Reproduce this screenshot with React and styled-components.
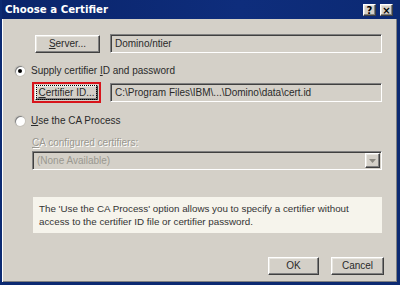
import React from "react";
import styled, { createGlobalStyle, css } from "styled-components";

const Global = createGlobalStyle`
  html, body { margin: 0; padding: 0; background: #d4d0c8; }
  body { font-family: "Liberation Sans", Arial, sans-serif; }
`;

const Window = styled.div`
  width: 400px;
  height: 285px;
  box-sizing: border-box;
  display: flex;
  flex-direction: column;
  background: #0c2a72;
  padding: 0 3px 3px 2px;
`;

const TitleBar = styled.div`
  height: 19px;
  display: flex;
  align-items: center;
  padding: 0 4px 0 3px;
  background: linear-gradient(90deg, #0a246a, #0e2d7c 60%, #0c2a74);
  color: #fff;
  font-family: "DejaVu Sans", sans-serif;
  font-weight: bold;
  font-size: 10.2px;
`;

const TitleText = styled.span`
  flex: 1;
`;

const raised = css`
  border-top: 1px solid #fff;
  border-left: 1px solid #fff;
  border-right: 1px solid #404040;
  border-bottom: 1px solid #404040;
  box-shadow: inset -1px -1px 0 #808080, inset 1px 1px 0 #e8e6e0;
`;

const sunken = css`
  border-top: 1px solid #808080;
  border-left: 1px solid #808080;
  border-right: 1px solid #fff;
  border-bottom: 1px solid #fff;
  box-shadow: inset 1px 1px 0 #404040, inset -1px -1px 0 #d4d0c8;
`;

const CapButton = styled.span`
  ${raised};
  width: 13px;
  height: 12px;
  margin-left: 4px;
  background: #d4d0c8;
  color: #000;
  font-family: "DejaVu Sans", sans-serif;
  font-weight: bold;
  font-size: 10px;
  line-height: 11px;
  text-align: center;
  box-sizing: border-box;
`;

const Body = styled.div`
  flex: 1;
  background: #d4d0c8;
  box-shadow: inset 1px 0 0 #fff, inset -1px 0 0 #808080, inset 0 -1px 0 #808080;
  padding: 15px 15px 0 13px;
  font-size: 10px;
  color: #2a2a2a;
  display: flex;
  flex-direction: column;
`;

const Row = styled.div`
  display: flex;
  align-items: center;
  margin-top: ${(p) => p.$mt || 0}px;
  padding-left: ${(p) => p.$indent || 0}px;
`;

const Button = styled.button`
  ${raised};
  font: inherit;
  line-height: 12px;
  color: #2a2a2a;
  background: #d4d0c8;
  width: ${(p) => p.$w || 65}px;
  height: ${(p) => p.$h || 18}px;
  padding: 0;
  box-sizing: border-box;
  cursor: default;
`;

const FocusRing = styled.span`
  display: flex;
  border: 2px solid #d8141b;
  padding: 1px;
  margin-left: -3px;
`;

const FocusText = styled.span`
  outline: 1px dotted #000;
  outline-offset: 1px;
`;

const Field = styled.div`
  ${sunken};
  flex: 1;
  height: 19px;
  box-sizing: border-box;
  margin-left: ${(p) => p.$ml ?? 10}px;
  padding: 0 4px;
  display: flex;
  align-items: center;
  color: ${(p) => (p.$disabled ? "#9a9890" : "#2a2a2a")};
  white-space: nowrap;
  overflow: hidden;
`;

const Radio = styled.span`
  width: 10px;
  height: 10px;
  border-radius: 50%;
  background: #fff;
  box-shadow: inset 1px 1px 0 #808080, 0 0 0 1px #c8c4bc;
  margin-right: 6px;
  display: flex;
  align-items: center;
  justify-content: center;
  &::after {
    content: "";
    width: 4px;
    height: 4px;
    border-radius: 50%;
    background: ${(p) => (p.$checked ? "#000" : "transparent")};
  }
`;

const Label = styled.span`
  color: ${(p) => (p.$disabled ? "#9a9890" : "#2a2a2a")};
  text-shadow: ${(p) => (p.$disabled ? "1px 1px 0 #fff" : "none")};
`;

const DropButton = styled.span`
  ${raised};
  width: 15px;
  height: 15px;
  box-sizing: border-box;
  margin-left: auto;
  margin-right: -3px;
  display: flex;
  align-items: center;
  justify-content: center;
  background: #d4d0c8;
`;

const Info = styled.div`
  margin: 27px 0 0 18px;
  background: #f6f4ec;
  padding: 5px 6px 5px 6px;
  font-size: 9.8px;
  line-height: 13px;
  color: #333;
  white-space: nowrap;
`;

const Footer = styled.div`
  display: flex;
  justify-content: flex-end;
  gap: 12px;
  margin-top: 24px;
  margin-right: -2px;
`;

export default function App() {
  return (
    <>
      <Global />
      <Window>
        <TitleBar>
          <TitleText>Choose a Certifier</TitleText>
          <CapButton>?</CapButton>
          <CapButton>×</CapButton>
        </TitleBar>
        <Body>
          <Row $indent={20}>
            <Button $w={65}>
              <u>S</u>erver...
            </Button>
            <Field>Domino/ntier</Field>
          </Row>
          <Row $mt={12}>
            <Radio $checked />
            <Label>
              Supply certifier <u>I</u>D and password
            </Label>
          </Row>
          <Row $mt={6} $indent={20}>
            <FocusRing>
              <Button $w={63} $h={15}>
                <FocusText>
                  <u>C</u>ertifier ID...
                </FocusText>
              </Button>
            </FocusRing>
            <Field $ml={9}>C:\Program Files\IBM\...\Domino\data\cert.id</Field>
          </Row>
          <Row $mt={12}>
            <Radio />
            <Label>
              <u>U</u>se the CA Process
            </Label>
          </Row>
          <Row $mt={11} $indent={17}>
            <Label $disabled>
              <u>C</u>A configured certifiers:
            </Label>
          </Row>
          <Row $mt={3} $indent={17}>
            <Field $ml={0} $disabled>
              (None Available)
              <DropButton>
                <svg width="7" height="4" viewBox="0 0 7 4">
                  <path d="M0 0h7L3.5 4z" fill="#8a8880" />
                </svg>
              </DropButton>
            </Field>
          </Row>
          <Info>
            The 'Use the CA Process' option allows you to specify a certifier without
            <br />
            access to the certifier ID file or certifier password.
          </Info>
          <Footer>
            <Button $w={51}>OK</Button>
            <Button $w={53}>Cancel</Button>
          </Footer>
        </Body>
      </Window>
    </>
  );
}
